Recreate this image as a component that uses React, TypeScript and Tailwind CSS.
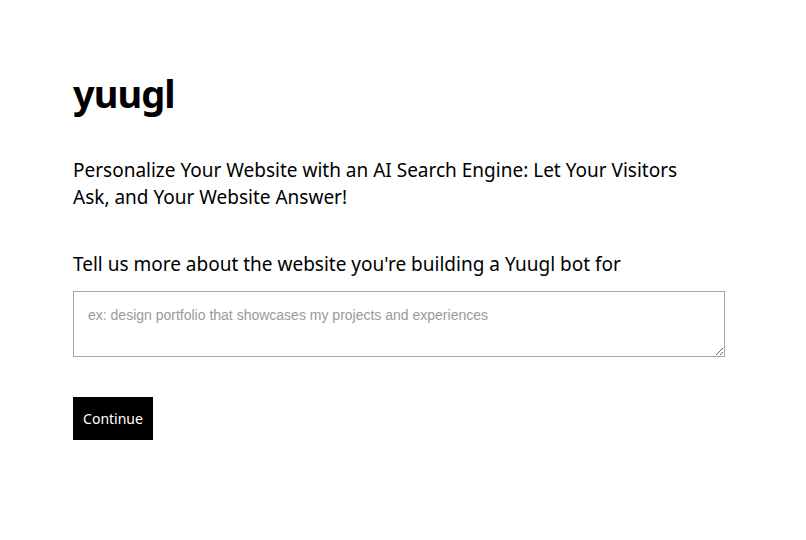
export default function App() {
  return (
    <main className="min-h-screen bg-white text-black">
      <div className="pl-[73px] pr-[82px] pt-[70px] font-['Noto_Sans',sans-serif]">
        <h1 className="text-[38px] leading-[46px] font-bold tracking-tight">yuugl</h1>

        <p className="mt-[41px] max-w-[640px] text-[19px] leading-[27px]">
          Personalize Your Website with an AI Search Engine: Let Your Visitors Ask, and Your Website Answer!
        </p>

        <p className="mt-[40px] text-[19px] leading-[27px]">
          Tell us more about the website you're building a Yuugl bot for
        </p>

        <textarea
          className="mt-[13px] block w-[652px] h-[66px] border border-[#a6a6a6] px-[14px] py-[13px] text-[14px] leading-[20px] font-['Liberation_Sans',sans-serif] placeholder:text-[#9a9a9a] outline-none"
          placeholder="ex: design portfolio that showcases my projects and experiences"
        />

        <button className="mt-[40px] w-[80px] h-[43px] bg-black text-white text-[14px]">
          Continue
        </button>
      </div>
    </main>
  );
}
